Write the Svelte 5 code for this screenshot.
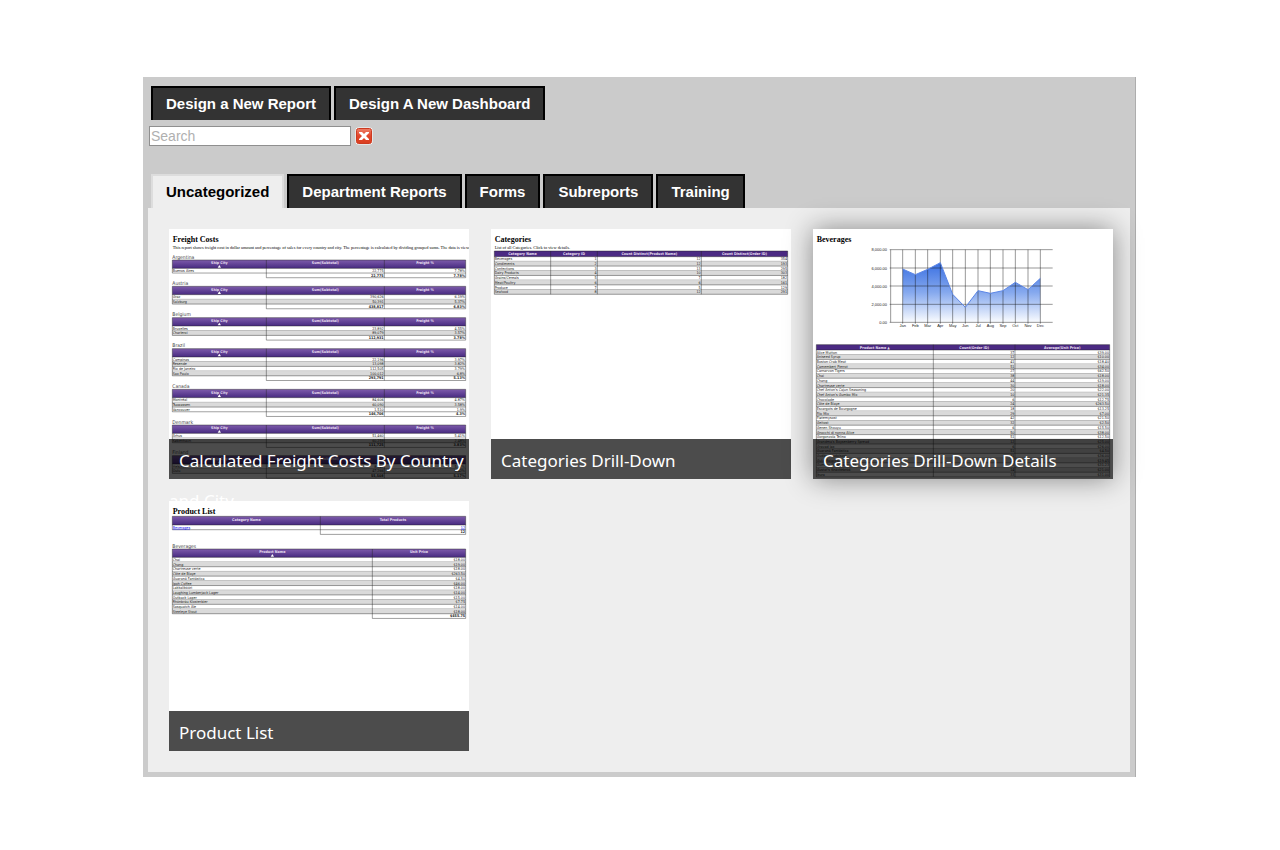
<script>
  // Geometry inside a preview is in thirds of a screen pixel: a 300x250 picture is 900x750 units.
  const ROW = 14.1;
  const L = 10;
  const R = 890;

  const freight = [
    ['Argentina', 93, [['Buenos Aires', '22,775', '7.78%']], ['22,775', '7.78%']],
    ['Austria', 172, [['Graz', '390,626', '6.19%'], ['Salzburg', '50,391', '5.37%']], ['438,817', '6.83%']],
    ['Belgium', 266, [['Bruxelles', '23,892', '4.55%'], ['Charleroi', '89,079', '3.57%']], ['112,931', '3.78%']],
    ['Brazil', 359, [['Campinas', '22,196', '3.97%'], ['Resende', '13,098', '3.82%'], ['Rio de Janeiro', '112,505', '3.79%'], ['Sao Paulo', '100,012', '6.8%']], ['293,791', '5.13%']],
    ['Canada', 481, [['Montréal', '84,606', '4.87%'], ['Tsawassen', '60,090', '3.58%'], ['Vancouver', '1,510', '1.9%']], ['146,706', '4.3%']],
    ['Denmark', 588, [['Århus', '51,460', '5.41%'], ['København', '60,259', '2.48%']], ['111,725', '3.83%']],
    ['Finland', 680, [['Helsinki', '8,242', '5.17%'], ['Oulu', '47,266', '5.42%']], ['55,508', '5.17%']],
  ].map(([label, top, rows, total]) => ({
    label, top, head: 25, gradient: true, arrow: true, cols: [L, 292, 646, R],
    names: ['Ship City', 'Sum(Subtotal)', 'Freight %'], rows, total,
  }));

  const drinks = [
    ['Alice Mutton', '37', '$39.00'], ['Aniseed Syrup', '12', '$10.00'], ['Boston Crab Meat', '41', '$18.40'],
    ['Camembert Pierrot', '51', '$34.00'], ['Carnarvon Tigers', '27', '$62.50'], ['Chai', '38', '$18.00'],
    ['Chang', '44', '$19.00'], ['Chartreuse verte', '30', '$18.00'], ["Chef Anton's Cajun Seasoning", '20', '$22.00'],
    ["Chef Anton's Gumbo Mix", '10', '$21.35'], ['Chocolade', '6', '$12.75'], ['Côte de Blaye', '24', '$263.50'],
    ['Escargots de Bourgogne', '18', '$13.25'], ['Filo Mix', '29', '$7.00'], ['Fløtemysost', '42', '$21.50'],
    ['Geitost', '32', '$2.50'], ['Genen Shouyu', '6', '$15.50'], ['Gnocchi di nonna Alice', '50', '$38.00'],
    ['Gorgonzola Telino', '51', '$12.50'], ["Grandma's Boysenberry Spread", '12', '$25.00'], ['Gravad lax', '6', '$26.00'],
    ['Guaraná Fantástica', '51', '$4.50'], ['Gudbrandsdalsost', '31', '$36.00'], ['Gula Malacca', '24', '$19.45'],
    ['Gumbär Gummibärchen', '32', '$31.23'], ["Gustaf's Knäckebröd", '14', '$21.00'], ['Ikura', '33', '$31.00'],
  ];

  const reports = [
    {
      name: 'Calculated Freight Costs By Country and City',
      title: 'Freight Costs',
      note: 'This report shows freight cost in dollar amount and percentage of sales for every country and city. The percentage is calculated by dividing grouped sums. The data is viewed',
      tables: freight,
    },
    {
      name: 'Categories Drill-Down',
      title: 'Categories',
      note: 'List of all Categories. Click to view details.',
      tables: [{
        top: 66, head: 17, cols: [L, 179, 319, 631, R],
        names: ['Category Name', 'Category ID', 'Count Distinct(Product Name)', 'Count Distinct(Order ID)'],
        rows: [
          ['Beverages', '1', '12', '354'], ['Condiments', '2', '12', '193'], ['Confections', '3', '13', '295'],
          ['Dairy Products', '4', '10', '303'], ['Grains/Cereals', '5', '7', '182'], ['Meat/Poultry', '6', '6', '161'],
          ['Produce', '7', '5', '129'], ['Seafood', '8', '12', '291'],
        ],
      }],
    },
    {
      name: 'Categories Drill-Down Details',
      title: 'Beverages',
      chart: true,
      raised: true,
      tables: [{
        top: 347, head: 16, cols: [L, 361, 606, R],
        names: ['Product Name ▲', 'Count(Order ID)', 'Average(Unit Price)'], rows: drinks,
      }],
    },
    {
      name: 'Product List',
      title: 'Product List',
      tables: [
        {
          top: 46, head: 26, gradient: true, link: true, cols: [L, 454, R],
          names: ['Category Name', 'Total Products'], rows: [['Beverages', '12']], total: ['12'],
        },
        {
          label: 'Beverages', top: 144, head: 25, gradient: true, arrow: true, cols: [L, 610, R],
          names: ['Product Name', 'Unit Price'],
          rows: [
            ['Chai', '$18.00'], ['Chang', '$19.00'], ['Chartreuse verte', '$18.00'], ['Côte de Blaye', '$263.50'],
            ['Guaraná Fantástica', '$4.50'], ['Ipoh Coffee', '$46.00'], ['Lakkalikööri', '$18.00'],
            ['Laughing Lumberjack Lager', '$14.00'], ['Outback Lager', '$15.00'], ['Rhönbräu Klosterbier', '$7.75'],
            ['Sasquatch Ale', '$14.00'], ['Steeleye Stout', '$18.00'],
          ],
          total: ['$455.75'],
        },
      ],
    },
  ];

  const months = ['Jan', 'Feb', 'Mar', 'Apr', 'May', 'Jun', 'Jul', 'Aug', 'Sep', 'Oct', 'Nov', 'Dec'];
  const monthX = [269, 307, 344, 382, 419, 457, 495, 532, 570, 607, 645, 682];
  const salesY = [120, 137, 121, 101, 196, 235, 185, 193, 185, 160, 182, 148];
  const line = monthX.map((x, i) => `${x},${salesY[i]}`).join(' ');
  const scale = [['8,000.00', 62], ['6,000.00', 117], ['4,000.00', 171], ['2,000.00', 226], ['0.00', 280]];

  const tabs = ['Uncategorized', 'Department Reports', 'Forms', 'Subreports', 'Training'];
  let active = $state('Uncategorized');
  let query = $state('');
</script>

{#snippet grid(t)}
  {@const first = t.top + t.head}
  {@const end = first + t.rows.length * ROW}
  {#if t.label}<text class="group" x={L} y={t.top - 4}>{t.label}</text>{/if}
  <rect x={L} y={t.top} width={R - L} height={t.head} fill={t.gradient ? 'url(#head)' : '#4b2a83'} />
  {#each t.names as name, i}
    <text class="head" x={(t.cols[i] + t.cols[i + 1]) / 2} y={t.top + 13}>{name}</text>
  {/each}
  {#if t.arrow}
    {@const c = (t.cols[0] + t.cols[1]) / 2}
    <path d="M{c - 5} {t.top + 23}l5 -8l5 8z" fill="#fff" />
  {/if}
  {#each t.rows as row, r}
    {@const y = first + r * ROW}
    {#if r % 2}<rect x={L} {y} width={R - L} height={ROW} fill="#dadada" />{/if}
    <path class="rule" d="M{L} {y + ROW}H{R}" />
    {#each row as cell, i}
      <text class="cell" class:num={i > 0} class:link={t.link} x={i ? t.cols[i + 1] - 2 : L + 1} y={y + 11}>{cell}</text>
    {/each}
  {/each}
  {#if t.total}
    <path class="rule" d="M{t.cols[1]} {end + ROW}H{R}" />
    {#each t.total as cell, i}
      <text class="cell num total" x={t.cols[i + 2] - 2} y={end + 11}>{cell}</text>
    {/each}
  {/if}
  <path class="rule" d="M{L} {t.top}H{R}M{L} {first}H{R}M{L} {t.top}V{end}" />
  {#each t.cols.slice(1) as x}
    <path class="rule" d="M{x} {t.top}V{t.total ? end + ROW : end}" />
  {/each}
{/snippet}

{#snippet chart()}
  <polygon points="{line} 682,280 269,280" fill="url(#area)" />
  {#each scale as [label, y]}
    <path class="axis" d="M230 {y}H719" />
    <text class="tick end" x="222" y={y + 5}>{label}</text>
  {/each}
  <path class="axis" d="M233 62V280" />
  {#each months as month, i}
    <path class="axis" d="M{monthX[i]} 62V284" />
    <text class="tick mid" x={monthX[i]} y="294">{month}</text>
  {/each}
  <polyline points={line} fill="none" stroke="#5c86e6" stroke-width="3" />
{/snippet}

<svg class="defs" aria-hidden="true">
  <defs>
    <linearGradient id="head" x1="0" y1="0" x2="0" y2="1">
      <stop offset="0" stop-color="#7d5bab" />
      <stop offset="1" stop-color="#472a80" />
    </linearGradient>
    <linearGradient id="area" x1="0" y1="0" x2="0" y2="1">
      <stop offset="0" stop-color="#3a70e2" />
      <stop offset="0.5" stop-color="#86a9ee" />
      <stop offset="1" stop-color="#fafcff" />
    </linearGradient>
    <linearGradient id="red" x1="0" y1="0" x2="0" y2="1">
      <stop offset="0" stop-color="#ee8069" />
      <stop offset="0.5" stop-color="#e2452a" />
      <stop offset="1" stop-color="#da3f20" />
    </linearGradient>
  </defs>
</svg>

<main>
  <div class="bar">
    <button type="button" class="tab">Design a New Report</button>
    <button type="button" class="tab">Design A New Dashboard</button>
  </div>
  <div class="search">
    <input type="text" placeholder="Search" aria-label="Search" bind:value={query} />
    <button type="button" class="clear" aria-label="Clear search" onclick={() => (query = '')}>
      <svg viewBox="0 0 18 18" width="18" height="18" aria-hidden="true">
        <rect x="0.5" y="0.5" width="17" height="17" rx="3" fill="#fff" />
        <rect x="1.5" y="1.500" width="15" height="15" rx="2" fill="url(#red)" stroke="#cc3a20" />
        <path d="M4 5h3l2 2l2 -2h3v1l-3 3l3 3v1h-3l-2 -2l-2 2h-3v-1l3 -3l-3 -3z" fill="#fff" />
      </svg>
    </button>
  </div>
  <nav class="bar">
    {#each tabs as tab}
      <button type="button" class="tab" class:active={tab === active} onclick={() => (active = tab)}>{tab}</button>
    {/each}
  </nav>
  <section class="panel">
    {#each reports as report}
      <a class="card" class:raised={report.raised} href="#report">
        <svg class="preview" viewBox="0 0 900 750" aria-hidden="true">
          <rect width="900" height="750" fill="#fff" />
          <text class="title" x="11" y="38">{report.title}</text>
          {#if report.note}<text class="note" x="11" y="60">{report.note}</text>{/if}
          {#if report.chart}{@render chart()}{/if}
          {#each report.tables as t}{@render grid(t)}{/each}
        </svg>
        <span class="caption">{report.name}</span>
      </a>
    {/each}
  </section>
</main>

<style>
  :global(body) {
    padding-right: 1px;
    background: #fff;
  }
  .defs {
    position: absolute;
    width: 0;
    height: 0;
  }
  main {
    box-sizing: border-box;
    max-width: 993px;
    margin: 77px auto;
    padding: 9px 5px 5px;
    border-right: 1px solid #adadad;
    background: #cbcbcb;
    font-family: 'Liberation Sans', Arial, sans-serif;
  }
  .bar {
    display: flex;
    flex-wrap: wrap;
    gap: 3px;
    padding-left: 3px;
  }
  .tab {
    box-sizing: border-box;
    height: 34px;
    padding: 0 13px;
    border: 2px solid #000;
    border-bottom: 0;
    background: #333;
    color: #fff;
    font: bold 15px/32px 'Liberation Sans', Arial, sans-serif;
    cursor: pointer;
  }
  .tab.active {
    border-color: #ddd;
    background: #eee;
    color: #000;
  }
  .search {
    display: flex;
    align-items: center;
    gap: 4px;
    margin: 6px 0 28px;
    padding-left: 1px;
  }
  input {
    box-sizing: border-box;
    width: 202px;
    height: 20px;
    padding: 0 1px;
    border: 1px solid #8f8f8f;
    background: #fff;
    font: 14px/18px 'Liberation Sans', Arial, sans-serif;
  }
  input::placeholder {
    color: #b0b0b0;
    opacity: 1;
  }
  .clear {
    display: flex;
    padding: 0;
    border: 0;
    background: none;
    cursor: pointer;
  }
  .panel {
    display: flex;
    flex-wrap: wrap;
    gap: 22px;
    padding: 21px 17px 21px 21px;
    background: #eee;
  }
  .card {
    position: relative;
    width: 300px;
    height: 250px;
    color: #fff;
    text-decoration: none;
  }
  .raised {
    box-shadow: 0 0 26px rgba(0, 0, 0, 0.44);
  }
  .preview {
    display: block;
    width: 100%;
    height: 100%;
  }
  .caption {
    position: absolute;
    box-sizing: border-box;
    right: 0;
    bottom: 0;
    left: 0;
    height: 40px;
    padding-top: 2px;
    background: rgba(0, 0, 0, 0.7);
    font: 17px/40px 'Noto Sans', sans-serif;
    text-indent: 10px;
  }
  .title {
    font: bold 24px 'Liberation Serif', serif;
  }
  .note {
    font: 13px 'Liberation Serif', serif;
  }
  .group {
    font: 15px 'DejaVu Sans Condensed', 'DejaVu Sans', sans-serif;
    fill: #444;
  }
  .head {
    font: bold 11px 'DejaVu Sans Condensed', 'DejaVu Sans', sans-serif;
    fill: #e6dff0;
    text-anchor: middle;
  }
  .cell {
    font: 11px 'DejaVu Sans Condensed', 'DejaVu Sans', sans-serif;
    fill: #222;
  }
  .num {
    text-anchor: end;
  }
  .total {
    font-weight: bold;
  }
  .link {
    fill: #00e;
    text-decoration: underline;
  }
  .rule {
    fill: none;
    stroke: #222;
    stroke-opacity: 0.65;
    stroke-width: 2;
  }
  .axis {
    fill: none;
    stroke: #111;
    stroke-opacity: 0.65;
    stroke-width: 2;
  }
  .tick {
    font: 12px 'Liberation Sans', Arial, sans-serif;
    fill: #222;
  }
  .end {
    text-anchor: end;
  }
  .mid {
    text-anchor: middle;
  }
</style>
